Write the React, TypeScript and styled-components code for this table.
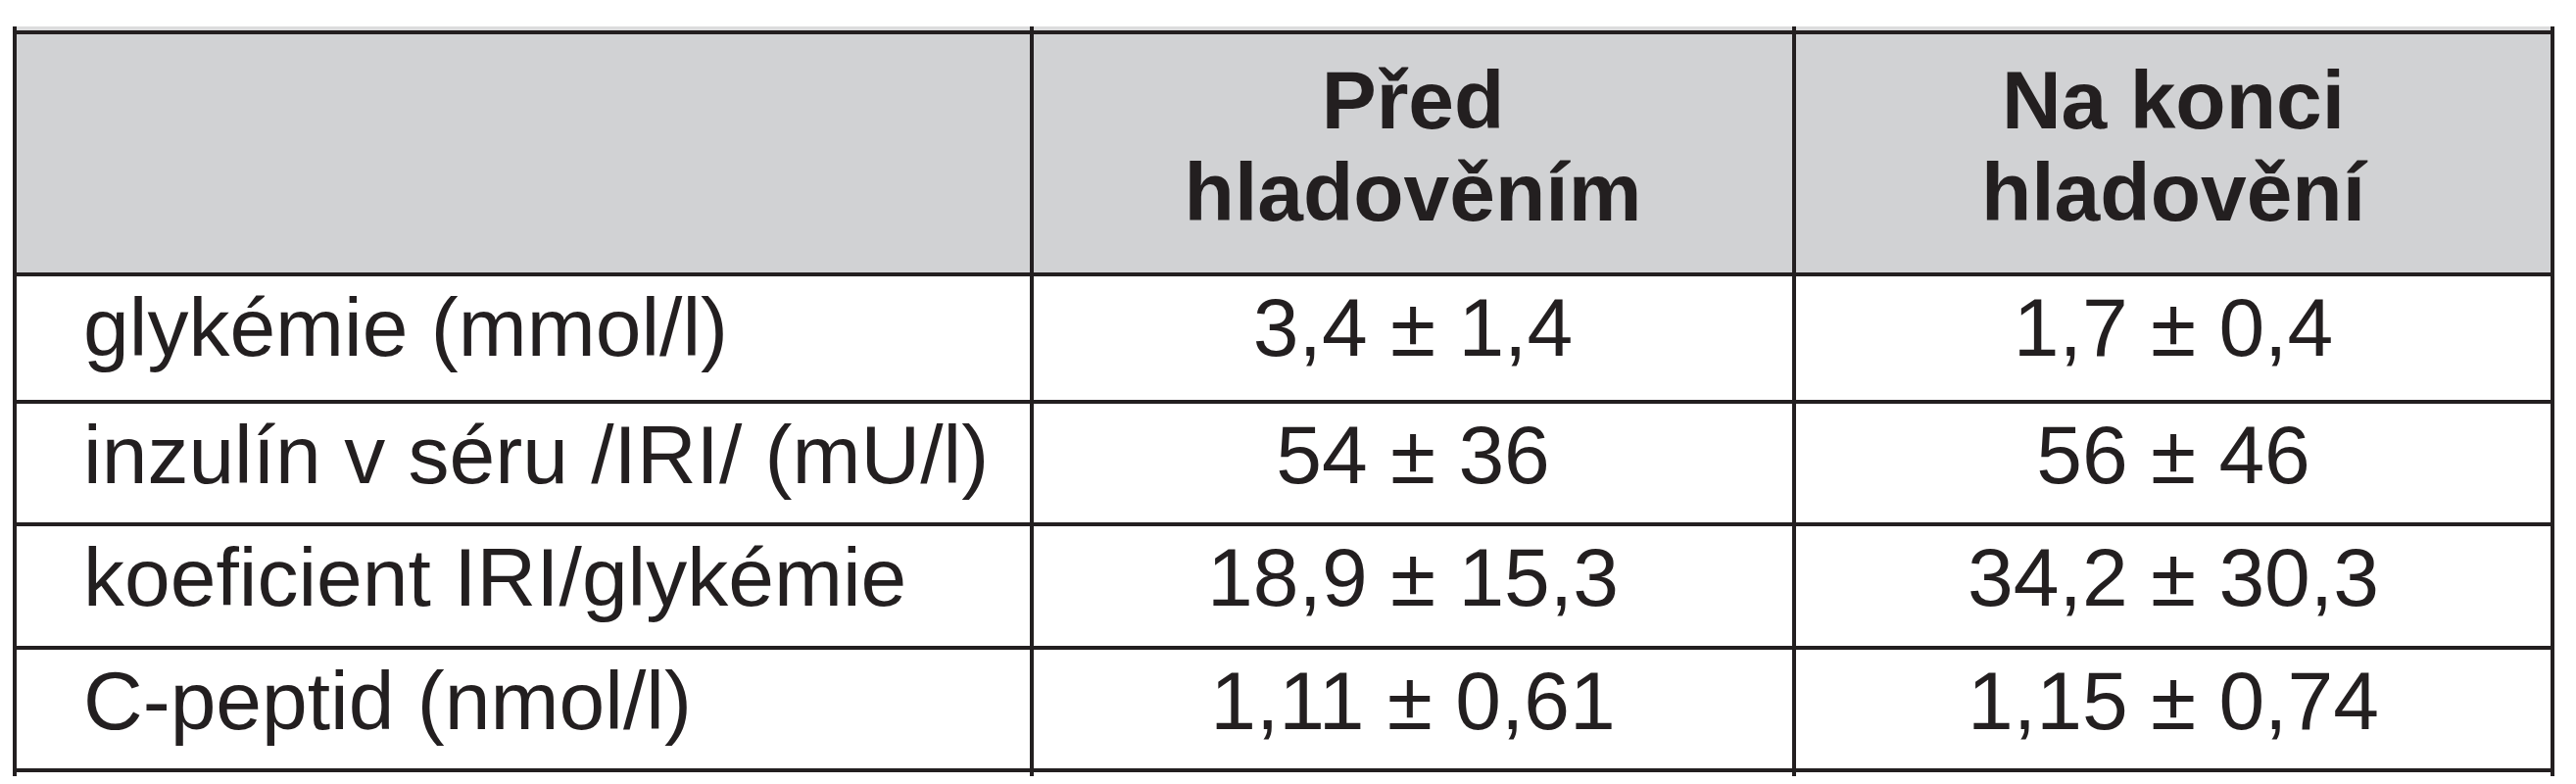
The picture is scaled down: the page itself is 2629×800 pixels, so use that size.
import React from "react";
import styled, { createGlobalStyle } from "styled-components";

const GlobalStyle = createGlobalStyle`
  html, body {
    margin: 0;
    padding: 0;
    background: #ffffff;
  }
  body {
    font-family: "Liberation Sans", Arial, Helvetica, sans-serif;
    color: #231f20;
  }
`;

const Page = styled.div`
  padding: 17px 0 0 13px;
`;

// lines of the table are the grid background showing through the gaps
const Table = styled.div`
  display: inline-grid;
  grid-template-columns: 1034px 774px 770px;
  grid-template-rows: 4px 243px 126px 121px 122px 121px 4px;
  gap: 4px;
  padding: 0 4px;
  background: #231f20;
`;

const Cap = styled.div<{ $top?: boolean }>`
  background: ${(p) => (p.$top ? "#dcdcdd" : "#ffffff")};
`;

const HeadCell = styled.div`
  background: #d1d2d4;
  padding-top: 20px;
  font-size: 84px;
  line-height: 94px;
  font-weight: 700;
  text-align: center;
`;

const Cell = styled.div<{ $label?: boolean }>`
  background: #ffffff;
  padding: ${(p) => (p.$label ? "10px 0 0 68px" : "10px 0 0 0")};
  font-size: 84px;
  line-height: 84px;
  text-align: ${(p) => (p.$label ? "left" : "center")};
  white-space: nowrap;
`;

const rows = [
  ["glykémie (mmol/l)", "3,4 ± 1,4", "1,7 ± 0,4"],
  ["inzulín v séru /IRI/ (mU/l)", "54 ± 36", "56 ± 46"],
  ["koeficient IRI/glykémie", "18,9 ± 15,3", "34,2 ± 30,3"],
  ["C-peptid (nmol/l)", "1,11 ± 0,61", "1,15 ± 0,74"],
];

export default function App() {
  return (
    <>
      <GlobalStyle />
      <Page>
        <Table>
          <Cap $top />
          <Cap $top />
          <Cap $top />

          <HeadCell />
          <HeadCell>
            Před
            <br />
            hladověním
          </HeadCell>
          <HeadCell>
            Na konci
            <br />
            hladovění
          </HeadCell>

          {rows.map(([label, before, after]) => (
            <React.Fragment key={label}>
              <Cell $label>{label}</Cell>
              <Cell>{before}</Cell>
              <Cell>{after}</Cell>
            </React.Fragment>
          ))}

          <Cap />
          <Cap />
          <Cap />
        </Table>
      </Page>
    </>
  );
}
